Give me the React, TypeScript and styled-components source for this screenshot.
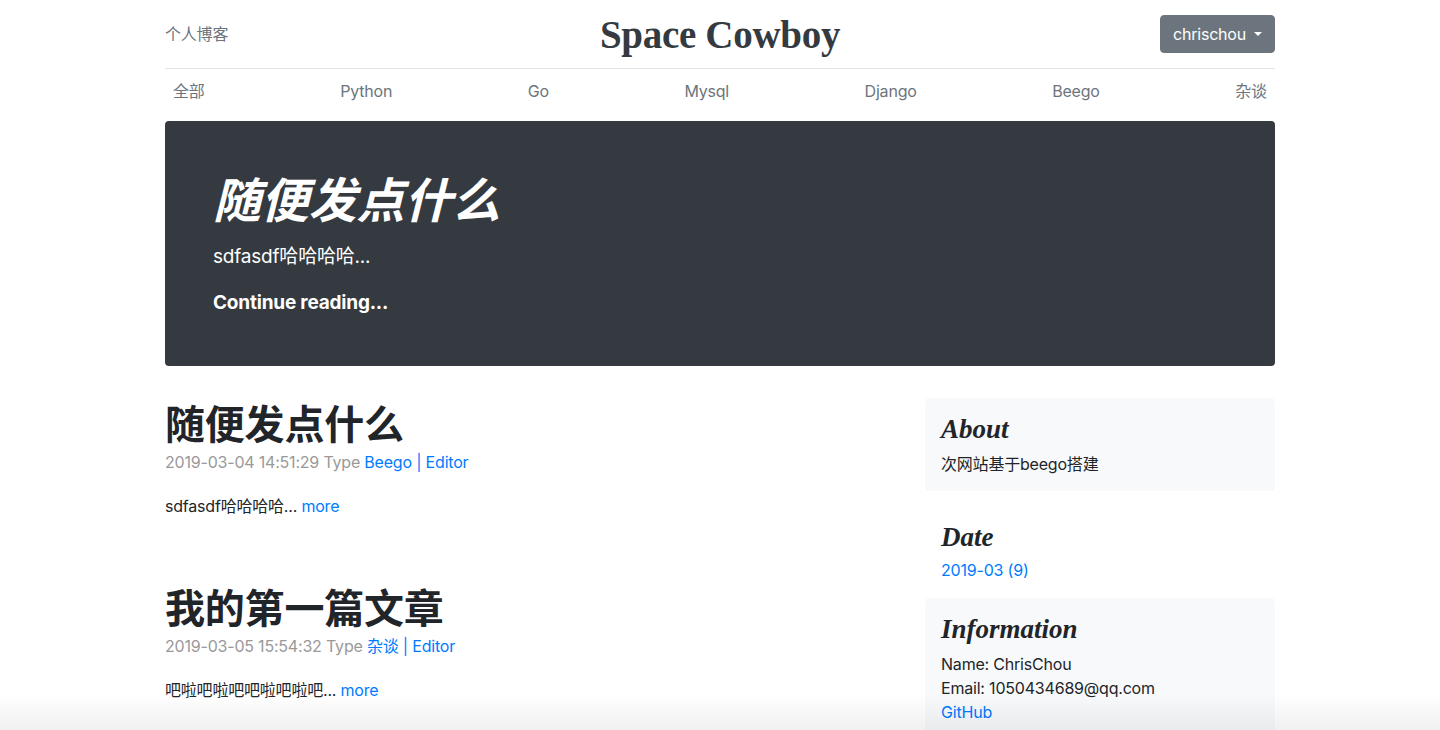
import React from 'react';
import styled, { createGlobalStyle } from 'styled-components';

const CATEGORIES = ['全部', 'Python', 'Go', 'Mysql', 'Django', 'Beego', '杂谈'];

const POSTS = [
  {
    title: '随便发点什么',
    date: '2019-03-04 14:51:29',
    type: 'Beego',
    summary: 'sdfasdf哈哈哈哈...',
  },
  {
    title: '我的第一篇文章',
    date: '2019-03-05 15:54:32',
    type: '杂谈',
    summary: '吧啦吧啦吧吧啦吧啦吧...',
  },
];

const GlobalStyle = createGlobalStyle`
  html, body {
    margin: 0;
    padding: 0;
    background: #fff;
  }
  body {
    font-family: Inter, "Noto Sans CJK SC", sans-serif;
    font-size: 16px;
    line-height: 1.5;
    letter-spacing: -0.2px;
    color: #212529;
  }
  * {
    box-sizing: border-box;
  }
`;

export default function App() {
  const navMarkup = CATEGORIES.map((name) => <NavLink key={name}>{name}</NavLink>);

  const postsMarkup = POSTS.map((post) => (
    <Post key={post.title}>
      <PostTitle>{post.title}</PostTitle>
      <PostMeta>
        {post.date} Type <Link>{post.type} | Editor</Link>
      </PostMeta>
      <PostBody>
        {post.summary} <Link>more</Link>
      </PostBody>
    </Post>
  ));

  return (
    <>
      <GlobalStyle />
      <Container>
        <Header>
          <HeaderSide>
            <MutedLink>个人博客</MutedLink>
          </HeaderSide>
          <Logo>Space Cowboy</Logo>
          <HeaderSide align="flex-end">
            <DropdownButton>
              chrischou
              <Caret />
            </DropdownButton>
          </HeaderSide>
        </Header>
        <Nav>{navMarkup}</Nav>

        <Jumbotron>
          <JumboTitle>随便发点什么</JumboTitle>
          <Lead>sdfasdf哈哈哈哈...</Lead>
          <Lead bold>Continue reading...</Lead>
        </Jumbotron>

        <Main>
          <PostsColumn>{postsMarkup}</PostsColumn>
          <Sidebar>
            <SideBox light>
              <SideTitle>About</SideTitle>
              <SideText>次网站基于beego搭建</SideText>
            </SideBox>
            <SideBox compact>
              <SideTitle>Date</SideTitle>
              <SideList>
                <li>
                  <Link>2019-03 (9)</Link>
                </li>
              </SideList>
            </SideBox>
            <SideBox light>
              <SideTitle>Information</SideTitle>
              <SideList>
                <li>Name: ChrisChou</li>
                <li>Email: 1050434689@qq.com</li>
                <li>
                  <Link>GitHub</Link>
                </li>
              </SideList>
            </SideBox>
          </Sidebar>
        </Main>
      </Container>
      <WindowShade />
    </>
  );
}

const Container = styled.div`
  width: 1110px;
  margin: 0 auto;
`;

const Header = styled.header`
  display: flex;
  align-items: center;
  justify-content: space-between;
  height: 69px;
  padding-bottom: 1px;
  line-height: 1;
  border-bottom: 1px solid #e5e5e5;
`;

const HeaderSide = styled.div<{ align?: string }>`
  flex: 1;
  display: flex;
  justify-content: ${(p) => p.align || 'flex-start'};
  align-items: center;
`;

const MutedLink = styled.span`
  color: #6c757d;
  font-size: 16px;
`;

const Logo = styled.div`
  margin-top: 2px;
  font-family: 'Liberation Serif', 'DejaVu Serif', serif;
  font-weight: 700;
  font-size: 39px;
  line-height: 36px;
  color: #343a40;
  letter-spacing: -0.3px;
`;

const DropdownButton = styled.button`
  display: inline-flex;
  align-items: center;
  height: 38px;
  padding: 6px 12px;
  border: 1px solid #6c757d;
  border-radius: 4px;
  background: #6c757d;
  color: #fff;
  font-family: Inter, sans-serif;
  font-size: 16px;
  line-height: 24px;
  letter-spacing: -0.2px;
`;

const Caret = styled.span`
  display: inline-block;
  margin-left: 8px;
  margin-top: 1px;
  border-top: 4.8px solid #fff;
  border-left: 4.8px solid transparent;
  border-right: 4.8px solid transparent;
`;

const Nav = styled.nav`
  display: flex;
  justify-content: space-between;
  height: 44px;
  margin-bottom: 8px;
`;

const NavLink = styled.span`
  padding: 12px 8px;
  font-size: 16px;
  line-height: 21px;
  color: #6c757d;
`;

const Jumbotron = styled.section`
  padding: 48px;
  margin-bottom: 32px;
  border-radius: 4px;
  background: #343a40;
  color: #fff;
`;

const JumboTitle = styled.h1`
  margin: 0 0 17px;
  font-family: 'Noto Sans CJK SC', sans-serif;
  font-style: italic;
  font-weight: 700;
  font-size: 48px;
  line-height: 56px;
`;

const Lead = styled.p<{ bold?: boolean }>`
  margin: 0 0 ${(p) => (p.bold ? '0' : '16px')};
  font-size: 19px;
  line-height: 30px;
  font-weight: ${(p) => (p.bold ? 700 : 400)};
`;

const Main = styled.div`
  display: flex;
  gap: 30px;
`;

const PostsColumn = styled.div`
  flex: 0 0 730px;
`;

const Post = styled.article`
  margin-bottom: 64px;
`;

const PostTitle = styled.h2`
  margin: 0 0 4px;
  font-family: 'Noto Sans CJK SC', sans-serif;
  font-weight: 700;
  font-size: 40px;
  line-height: 48px;
  color: #212529;
`;

const PostMeta = styled.p`
  margin: 0 0 20px;
  color: #999;
`;

const PostBody = styled.p`
  margin: 0;
`;

const Link = styled.a`
  color: #007bff;
  text-decoration: none;
`;

const Sidebar = styled.aside`
  flex: 1;
`;

const SideBox = styled.div<{ light?: boolean; compact?: boolean }>`
  padding: 16px;
  margin-bottom: ${(p) => (p.light ? '16px' : '0')};
  border-radius: 4px;
  background: ${(p) => (p.light ? '#f8f9fa' : 'transparent')};

  h4 {
    margin-top: ${(p) => (p.light ? '1px' : '0')};
    margin-bottom: ${(p) => (p.compact ? '6px' : '8px')};
  }
`;

const SideTitle = styled.h4`
  margin: 0 0 8px;
  font-family: 'Liberation Serif', 'DejaVu Serif', serif;
  font-style: italic;
  font-weight: 700;
  font-size: 27px;
  line-height: 29px;
  letter-spacing: 0;
  color: #212529;
`;

const SideText = styled.p`
  margin: 0 0 -1px;
`;

const SideList = styled.ol`
  margin: 0;
  padding: 0;
  list-style: none;
`;

const WindowShade = styled.div`
  position: fixed;
  left: 0;
  right: 0;
  bottom: 0;
  height: 36px;
  pointer-events: none;
  background: linear-gradient(to bottom, rgba(0, 0, 0, 0), rgba(0, 0, 0, 0.06));
`;
